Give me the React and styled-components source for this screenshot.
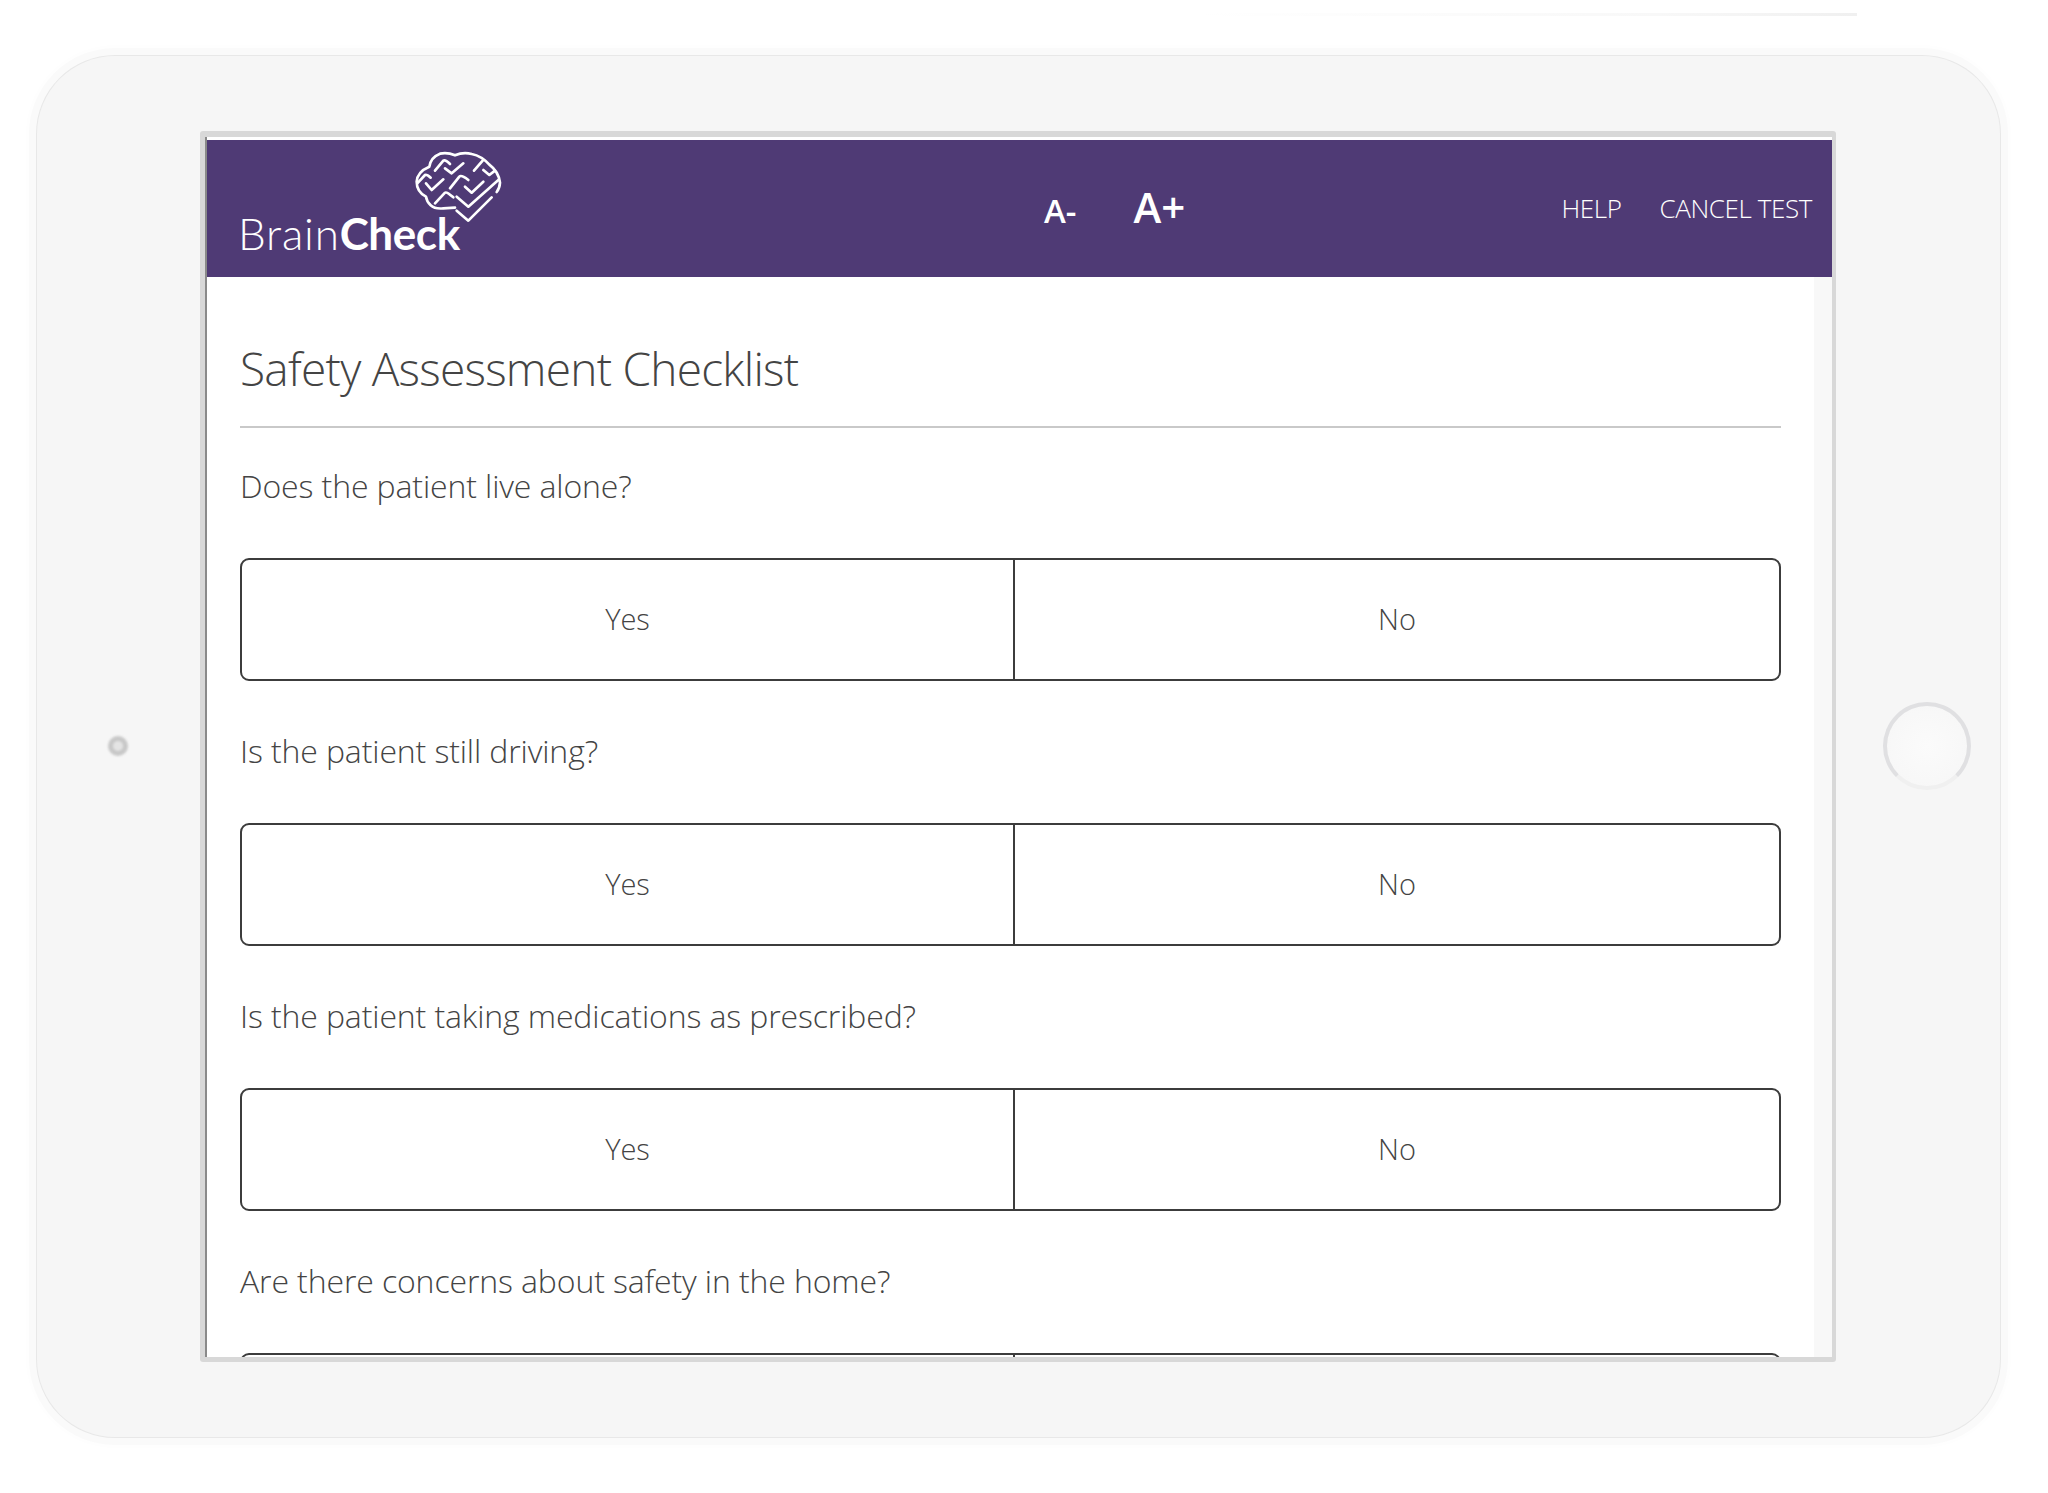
import React from "react";
import styled, { createGlobalStyle } from "styled-components";

const Global = createGlobalStyle`
  html, body { margin: 0; padding: 0; background: #fff; }
  body { font-family: "Open Sans", "Noto Sans", sans-serif; }
`;

const Page = styled.div`
  width: 2048px;
  height: 1493px;
  padding: 13px 48px 56px 37px;
  box-sizing: border-box;
  overflow: hidden;
`;

const PowerKey = styled.div`
  width: 660px;
  height: 3px;
  margin: 0 0 40px 1160px;
  background: linear-gradient(90deg, #fff, #f8f8f8 70%, #f0f0f0);
`;

const Device = styled.div`
  width: 1963px;
  height: 1381px;
  box-sizing: border-box;
  display: grid;
  grid-template-columns: 163px 1636px 164px;
  grid-template-rows: 75px 1231px 75px;
  background: #f6f6f6;
  border-radius: 78px;
  box-shadow: 0 0 0 1px #e8e8e8, 0 0 0 8px #fafafa, 0 0 10px 9px #fdfdfd;
`;

const Camera = styled.div`
  grid-column: 1;
  grid-row: 2;
  align-self: center;
  justify-self: center;
  margin: 0 2px 2px 0;
  width: 20px;
  height: 20px;
  border-radius: 50%;
  box-sizing: border-box;
  border: 5px solid #c8c8c8;
  background: #e4e4e4;
  filter: blur(1px);
`;

const HomeButton = styled.div`
  grid-column: 3;
  grid-row: 2;
  align-self: center;
  justify-self: end;
  margin: 0 29px 2px 0;
  width: 88px;
  height: 88px;
  border-radius: 50%;
  box-sizing: border-box;
  border: 4px solid #e0e0e2;
  border-bottom-color: #f0f0f0;
  background: radial-gradient(circle, #fbfbfb, #f6f6f6);
`;

const Screen = styled.div`
  grid-column: 2;
  grid-row: 2;
  box-sizing: border-box;
  display: flex;
  flex-direction: column;
  overflow: hidden;
  background: #fff;
  border: solid #d8d8d8;
  border-width: 6px 4px 5px 5px;
  border-radius: 3px;
  box-shadow: inset 2px 0 0 #8a8a8a;
  padding: 3px 0 0 2px;
`;

const Header = styled.header`
  flex: 0 0 137px;
  display: flex;
  align-items: center;
  background: #4f3a75;
  color: #fff;
`;

const Logo = styled.div`
  position: relative;
  flex: 0 0 260px;
  margin-left: 32px;
  align-self: stretch;
`;

const Wordmark = styled.div`
  position: absolute;
  left: -1px;
  bottom: 22px;
  font-family: "Lato", sans-serif;
  font-size: 44px;
  line-height: 1;
  font-weight: 300;
  letter-spacing: 0.8px;
`;

const Bold = styled.span`
  font-weight: 700;
  letter-spacing: -0.4px;
`;

const BrainMark = styled.svg`
  position: absolute;
  left: 161px;
  top: 0;
  width: 110px;
  height: 90px;
  fill: none;
  stroke: #fff;
  stroke-width: 8;
  stroke-linecap: round;
  stroke-linejoin: round;
`;

const FontSizes = styled.div`
  display: flex;
  align-items: baseline;
  gap: 57px;
  margin-left: 545px;
  padding-bottom: 3px;
`;

const SizeButton = styled.span`
  font-size: ${(p) => p.$size}px;
  line-height: 1;
  font-weight: 600;
`;

const Nav = styled.nav`
  margin-left: auto;
  padding: 0 20px 2px 0;
  display: flex;
  gap: 38px;
`;

const NavLink = styled.span`
  font-size: 26px;
  line-height: 1;
  font-weight: 300;
  letter-spacing: -0.4px;
`;

const Main = styled.main`
  flex: 1;
  min-height: 0;
  display: flex;
  flex-direction: column;
  padding: 0 33px 0 33px;
  background: #fff;
  border-right: 18px solid #f8f8f8;
  overflow: hidden;
`;

const Title = styled.h1`
  flex: none;
  margin: 0;
  padding: 60px 0 0;
  height: 151px;
  box-sizing: border-box;
  border-bottom: 2px solid #c9c9c9;
  font-size: 46px;
  line-height: 63px;
  font-weight: 300;
  letter-spacing: -0.75px;
  color: #444;
`;

const Question = styled.p`
  flex: none;
  margin: 0;
  padding-top: 37px;
  height: 130px;
  box-sizing: border-box;
  font-size: 32px;
  line-height: 42px;
  font-weight: 300;
  letter-spacing: -0.12px;
  color: #444;
`;

const Choice = styled.div`
  flex: none;
  height: 123px;
  display: grid;
  grid-template-columns: 771px 1fr;
  box-sizing: border-box;
  border: 2px solid #3c3c3c;
  border-radius: 9px;
  margin-bottom: 12px;
`;

const Option = styled.div`
  display: flex;
  align-items: center;
  justify-content: center;
  padding-bottom: 3px;
  font-size: 29px;
  font-weight: 300;
  color: #444;
  & + & { border-left: 2px solid #3c3c3c; }
`;

// last row runs under the bottom of the screen, only its top border shows
const questions = [
  { text: "Does the patient live alone?", labels: ["Yes", "No"] },
  { text: "Is the patient still driving?", labels: ["Yes", "No"] },
  { text: "Is the patient taking medications as prescribed?", labels: ["Yes", "No"] },
  { text: "Are there concerns about safety in the home?", labels: ["", ""] },
];

export default function App() {
  return (
    <Page>
      <Global />
      <PowerKey />
      <Device>
        <Camera />
        <Screen>
          <Header>
            <Logo>
              <Wordmark>Brain<Bold>Check</Bold></Wordmark>
              <BrainMark viewBox="0 0 330 270">
                <path d="M165 203 L130 205 Q105 208 92 196 Q80 185 78 170 Q50 155 50 125 Q52 95 88 80 Q92 52 120 41 Q142 36 165 46 Q190 35 215 42 Q245 48 268 74 Q296 95 300 128 Q299 145 290 156" />
                <path d="M170 170 L205 200 L295 120" />
                <path d="M170 212 L205 242 L275 172" />
                <path d="M105 92 L130 62 Q136 58 150 72" />
                <path d="M135 85 L155 100 L190 70" />
                <path d="M222 92 L248 62" />
                <path d="M250 90 L268 105 L285 92" />
                <path d="M54 128 L75 105 Q80 102 92 113" />
                <path d="M78 130 L95 150 L130 118" />
                <path d="M150 145 L178 110 Q184 104 205 120" />
                <path d="M195 140 L215 158 L250 125" />
                <path d="M105 190 L135 158 Q140 154 160 172" />
              </BrainMark>
            </Logo>
            <FontSizes>
              <SizeButton $size={33}>A-</SizeButton>
              <SizeButton $size={42}>A+</SizeButton>
            </FontSizes>
            <Nav>
              <NavLink>HELP</NavLink>
              <NavLink>CANCEL TEST</NavLink>
            </Nav>
          </Header>
          <Main>
            <Title>Safety Assessment Checklist</Title>
            {questions.map((q) => (
              <React.Fragment key={q.text}>
                <Question>{q.text}</Question>
                <Choice>
                  <Option>{q.labels[0]}</Option>
                  <Option>{q.labels[1]}</Option>
                </Choice>
              </React.Fragment>
            ))}
          </Main>
        </Screen>
        <HomeButton />
      </Device>
    </Page>
  );
}
